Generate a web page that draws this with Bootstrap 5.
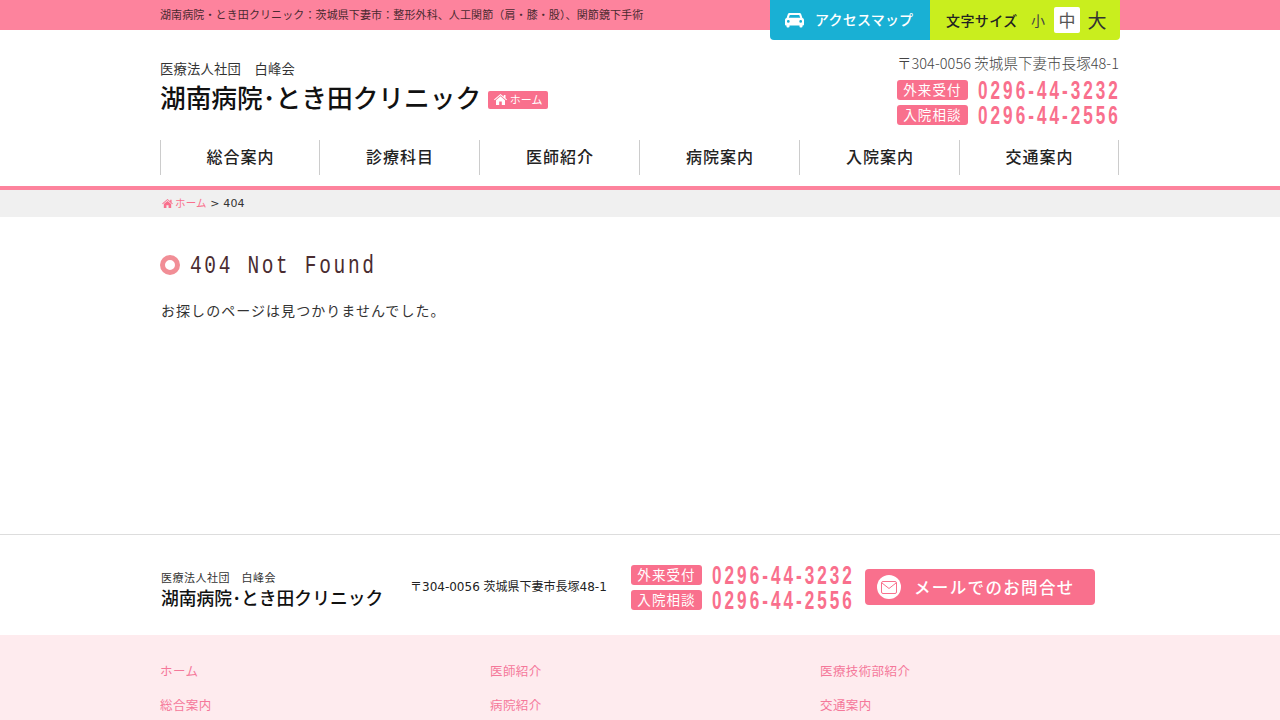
<!DOCTYPE html>
<html lang="ja">
<head>
<meta charset="utf-8">
<title>404 Not Found</title>
<link href="https://cdn.jsdelivr.net/npm/bootstrap@5.3.0/dist/css/bootstrap.min.css" rel="stylesheet">
<style>
html,body{height:720px;overflow:hidden}
body{font-family:"DejaVu Sans","Noto Sans CJK JP",sans-serif;color:#333;font-size:14px;background:#fff}
a{text-decoration:none}
.wrap{width:960px;margin:0 auto}
.topbar{height:30px;background:#fd839d}
.topbar .wrap{height:30px;position:relative}
.toptext{font-family:"Noto Sans CJK JP",sans-serif;font-size:11px;line-height:29px;color:#4a2a30;letter-spacing:.11px}
.topbtns{position:absolute;top:0;right:0;height:40px;border-radius:0 0 4px 4px;overflow:hidden;z-index:2}
.accessbtn{width:160px;background:#19b0d4;color:#fff;font-family:"Noto Sans CJK JP",sans-serif;font-size:14px;font-weight:500;letter-spacing:.2px;padding-left:15px;gap:11px}
.accessbtn span{padding-bottom:1px}
.sizebox{width:190px;background:#c9ee1e;font-family:"Noto Sans CJK JP",sans-serif;color:#222;padding-left:16px}
.sizelabel{font-size:14px;font-weight:500;letter-spacing:.4px;width:85px;flex:none}
.sz{display:flex;align-items:center;justify-content:center;width:26px;height:26px;color:#444}
.sz1{font-size:14px;width:14px;margin-right:9px}
.sz2{font-size:17px;background:#fff;border-radius:2px;color:#555}
.sz3{font-size:19px;width:34px;color:#333}
.headrow{height:110px;padding-top:28px}
.corp{font-family:"Noto Sans CJK JP",sans-serif;font-size:13.3px;line-height:21px;color:#333;letter-spacing:.2px}
.logoname{font-family:"Noto Sans CJK JP",sans-serif;font-size:25.7px;line-height:36px;font-weight:500;color:#111;margin-right:7px;white-space:nowrap}
.homebadge{background:#f9708d;color:#fff;border-radius:2px;font-size:11px;height:18px;width:60px;font-family:"Noto Sans CJK JP",sans-serif;gap:3px;margin-top:5px}
.rightcol{margin-top:-5px;flex:0 0 223px}
.addr{font-family:"Noto Sans CJK JP","DejaVu Sans",sans-serif;font-size:14.5px;font-weight:300;line-height:20px;color:#444;letter-spacing:.05px;margin-bottom:4px;text-align:right;white-space:nowrap;padding-right:1px}
.telrow{height:25px;gap:10px}
.tellabel{display:flex;align-items:center;justify-content:center;width:71px;height:20px;background:#f9708d;color:#fff;border-radius:3px;font-family:"Noto Sans CJK JP",sans-serif;font-size:13.5px;letter-spacing:1.1px;flex:none}
.telnum{flex:none;width:216px;margin-right:-74px;padding-top:1px;white-space:nowrap;font-family:"Liberation Sans",sans-serif;font-size:26px;font-weight:700;line-height:25px;color:#f9708d;letter-spacing:4.55px;transform:scaleX(.66);transform-origin:left center}
.gnav{height:46px;padding-bottom:11px}
.gnavitem{flex:0 0 160px;height:35px;display:flex;align-items:center;justify-content:center;padding:0 0 3px 1px;border-left:1px solid #ccc;font-family:"Noto Sans CJK JP",sans-serif;font-size:16px;font-weight:500;letter-spacing:1px;color:#222}
.gnavitem:first-child{flex:0 0 159px}
.gnavitem:last-child{flex:0 0 160px;border-right:1px solid #ccc}
.pinkline{height:4px;background:#fd839d}
.crumbs{height:27px;background:#f0f0f0;font-size:11px;line-height:26px;color:#333;letter-spacing:.15px}
.crumbs a{color:#f9708d;font-family:"Noto Sans CJK JP",sans-serif;font-size:10.5px}
.crumbs svg{margin:0 2px 0 2px;vertical-align:-1px}
.pagebody{height:317px;padding-top:33px}
.pagehead{gap:10px;height:30px}
.ring{width:20px;height:20px;border:5px solid #f18e96;border-radius:50%;background:#fff;flex:none}
.pagetitle{font-family:"Liberation Mono",monospace;font-size:25px;line-height:30px;color:#4a2c30;letter-spacing:3.4px;margin:0;padding-top:4px;font-weight:400;white-space:nowrap;transform:scaleX(.78);transform-origin:left center}
.pagetext{font-family:"Noto Sans CJK JP",sans-serif;font-size:14px;line-height:20px;letter-spacing:1.05px;color:#333;margin:20px 0 0;padding-left:1px}
.foot1{height:101px;border-top:1px solid #ddd}
.foot1 .wrap{height:100px;padding-top:32px;padding-left:1px}
.fcorp{font-family:"Noto Sans CJK JP",sans-serif;font-size:11px;line-height:17px;color:#333;letter-spacing:.5px;padding-top:2px;height:19px}
.fname{font-family:"Noto Sans CJK JP",sans-serif;font-size:17.8px;line-height:22px;font-weight:500;color:#111;white-space:nowrap}
.flogo{width:249px}
.faddr{width:221px;font-size:12px;line-height:16px;color:#222;white-space:nowrap;padding-top:12px}
.ftel{width:234px;margin-top:-5px}
.mailbtn{width:230px;height:36px;background:#f9708d;border-radius:4px;color:#fff;font-family:"Noto Sans CJK JP",sans-serif;font-size:16.5px;font-weight:500;letter-spacing:1.35px;padding-left:12px;gap:13px;margin-top:2px}
.mailico{width:24px;height:24px;border-radius:50%;background:#fff;flex:none}
.foot2{height:85px;background:#feebee;padding-top:27px}
.fcol{flex:0 0 330px}
.fcol a{display:block;font-family:"Noto Sans CJK JP",sans-serif;font-size:12.5px;line-height:17px;color:#f5789a;letter-spacing:.4px;margin-bottom:17px}
</style>
</head>
<body>
<div class="topbar">
  <div class="wrap">
    <div class="toptext">湖南病院・とき田クリニック：茨城県下妻市：整形外科、人工関節（肩・膝・股）、関節鏡下手術</div>
    <div class="topbtns d-flex">
      <a href="#" class="accessbtn d-flex align-items-center">
        <svg width="19" height="16" viewBox="0 0 19 16"><path fill="#fff" d="M4.500 1h10c.8 0 1.300.4 1.600 1.100L17.400 6c1 .3 1.600 1.100 1.600 2.100v4.400c0 .5-.4.900-.9.900h-.6v1.200c0 .5-.4.900-.9.900h-1.200c-.5 0-.9-.4-.9-.9v-1.200H4.500v1.200c0 .5-.4.900-.9.900H2.400c-.5 0-.9-.4-.9-.9v-1.200H.9c-.5 0-.9-.4-.9-.9V8.100C0 7.100.6 6.300 1.600 6l1.300-3.900C3.200 1.400 3.700 1 4.500 1zM4.800 2.900 3.800 5.800h11.400l-1-2.900zM3.300 8a1.400 1.400 0 1 0 0 2.800 1.400 1.400 0 0 0 0-2.800zm12.400 0a1.400 1.400 0 1 0 0 2.800 1.400 1.400 0 0 0 0-2.800z"/></svg>
        <span>アクセスマップ</span>
      </a>
      <div class="sizebox d-flex align-items-center">
        <span class="sizelabel">文字サイズ</span>
        <span class="sz sz1">小</span><span class="sz sz2">中</span><span class="sz sz3">大</span>
      </div>
    </div>
  </div>
</div>
<header class="wrap">
  <div class="headrow d-flex justify-content-between">
    <div>
      <div class="corp">医療法人社団　白峰会</div>
      <div class="d-flex align-items-center">
        <a href="#" class="logoname">湖南病院･とき田クリニック</a>
        <a href="#" class="homebadge d-flex align-items-center justify-content-center">
          <svg width="13" height="11" viewBox="0 0 13 11"><path fill="#fff" d="M6.500 0 9.800 2.800V1h1.700v3.200L13 5.500l-.7.800-5.800-5-5.800 5-.7-.8zM6.500 2.300l4.500 3.900V11H7.800V7.500H5.200V11H2V6.200z"/></svg>
          <span>ホーム</span>
        </a>
      </div>
    </div>
    <div class="rightcol">
      <div class="addr">〒304-0056 茨城県下妻市長塚48-1</div>
      <div class="telrow d-flex align-items-center"><span class="tellabel">外来受付</span><span class="telnum">0296-44-3232</span></div>
      <div class="telrow d-flex align-items-center"><span class="tellabel">入院相談</span><span class="telnum">0296-44-2556</span></div>
    </div>
  </div>
  <nav class="gnav d-flex">
    <a href="#" class="gnavitem">総合案内</a>
    <a href="#" class="gnavitem">診療科目</a>
    <a href="#" class="gnavitem">医師紹介</a>
    <a href="#" class="gnavitem">病院案内</a>
    <a href="#" class="gnavitem">入院案内</a>
    <a href="#" class="gnavitem">交通案内</a>
  </nav>
</header>
<div class="pinkline"></div>
<div class="crumbs">
  <div class="wrap">
    <a href="#"><svg width="11" height="9" viewBox="0 0 13 11"><path fill="#f9708d" d="M6.500 0 9.800 2.800V1h1.700v3.200L13 5.500l-.7.800-5.800-5-5.800 5-.7-.8zM6.500 2.300l4.500 3.900V11H7.800V7.500H5.200V11H2V6.200z"/></svg>ホーム</a> &gt; 404
  </div>
</div>
<main class="pagebody wrap">
  <div class="pagehead d-flex align-items-center">
    <span class="ring"></span>
    <h1 class="pagetitle">404 Not Found</h1>
  </div>
  <p class="pagetext">お探しのページは見つかりませんでした。</p>
</main>
<footer>
  <div class="foot1">
    <div class="wrap d-flex">
      <div class="flogo">
        <div class="fcorp">医療法人社団　白峰会</div>
        <div class="fname">湖南病院･とき田クリニック</div>
      </div>
      <div class="faddr">〒304-0056 茨城県下妻市長塚48-1</div>
      <div class="ftel">
        <div class="telrow d-flex align-items-center"><span class="tellabel">外来受付</span><span class="telnum">0296-44-3232</span></div>
        <div class="telrow d-flex align-items-center"><span class="tellabel">入院相談</span><span class="telnum">0296-44-2556</span></div>
      </div>
      <a href="#" class="mailbtn d-flex align-items-center">
        <span class="mailico d-flex align-items-center justify-content-center">
          <svg width="16" height="13" viewBox="0 0 16 13"><rect x=".5" y=".5" width="15" height="12" rx="1.500" fill="none" stroke="#f9708d"/><path d="M1 2l7 5.500L15 2" fill="none" stroke="#f9708d"/></svg>
        </span>
        <span>メールでのお問合せ</span>
      </a>
    </div>
  </div>
  <div class="foot2">
    <div class="wrap d-flex">
      <div class="fcol"><a href="#">ホーム</a><a href="#">総合案内</a></div>
      <div class="fcol"><a href="#">医師紹介</a><a href="#">病院紹介</a></div>
      <div class="fcol"><a href="#">医療技術部紹介</a><a href="#">交通案内</a></div>
    </div>
  </div>
</footer>
<script src="https://cdn.jsdelivr.net/npm/bootstrap@5.3.0/dist/js/bootstrap.bundle.min.js"></script>
</body>
</html>
